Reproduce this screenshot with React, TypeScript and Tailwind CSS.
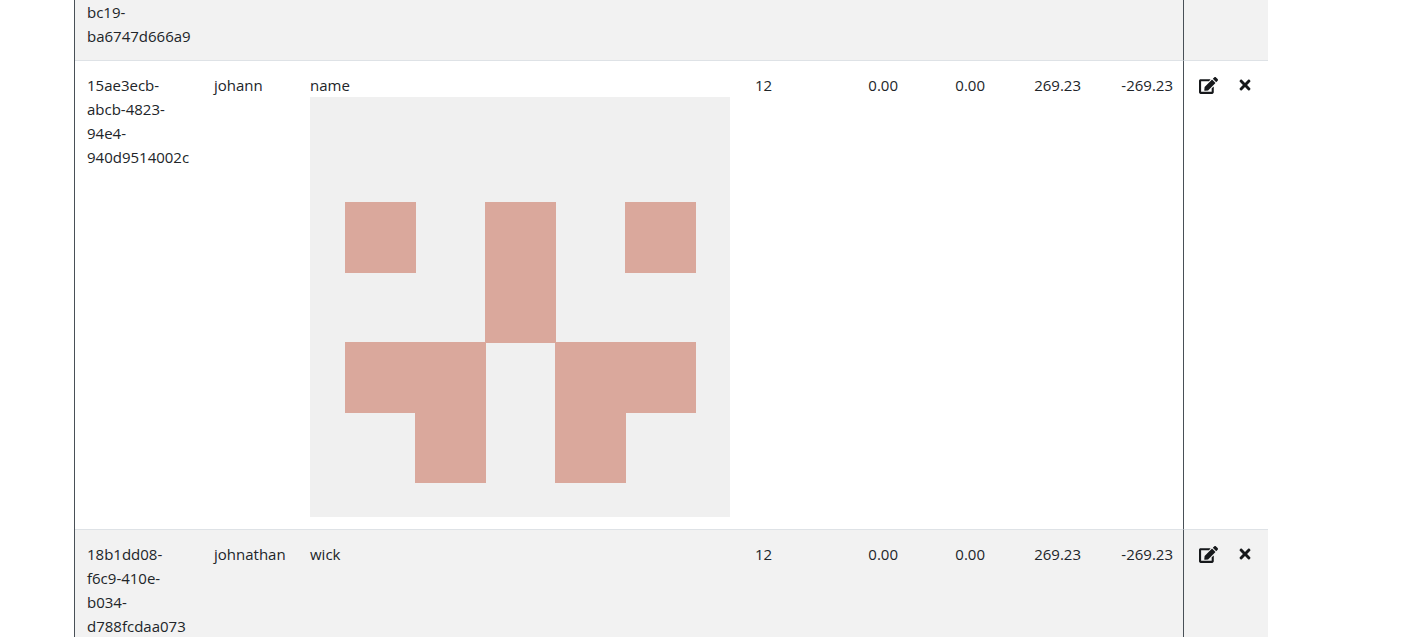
import { FaEdit, FaTimes } from "react-icons/fa";

type Row = {
  id: string[];
  user: string;
  name: string;
  qty: string;
  a: string;
  b: string;
  c: string;
  d: string;
  avatar?: boolean;
};

const rows: Row[] = [
  {
    id: ["15ae3ecb-", "abcb-4823-", "94e4-", "940d9514002c"],
    user: "johann",
    name: "name",
    qty: "12",
    a: "0.00",
    b: "0.00",
    c: "269.23",
    d: "-269.23",
    avatar: true,
  },
  {
    id: ["18b1dd08-", "f6c9-410e-", "b034-", "d788fcdaa073"],
    user: "johnathan",
    name: "wick",
    qty: "12",
    a: "0.00",
    b: "0.00",
    c: "269.23",
    d: "-269.23",
  },
];

// Identicon cells as [col, row]
const cells = [
  [0, 1], [2, 1], [4, 1],
  [2, 2],
  [0, 3], [1, 3], [3, 3], [4, 3],
  [1, 4], [3, 4],
];

const Identicon = () => (
  <svg viewBox="0 0 420 420" className="block w-[420px] h-[420px] bg-[#f0f0f0]">
    {cells.map(([x, y]) => (
      <rect key={`${x}-${y}`} x={35 + x * 70} y={35 + y * 70} width={71} height={71} fill="#daa89c" />
    ))}
  </svg>
);

export default function App() {
  return (
    <div className="h-[637px] overflow-hidden bg-white font-['Open_Sans',sans-serif] text-[15px] leading-6 text-[#212529]">
      <table className="ml-[74px] w-[1194px] table-fixed border-separate border-spacing-0 border-l border-l-[#495057]">
        <colgroup>
          <col className="w-[127px]" />
          <col className="w-[96px]" />
          <col className="w-[445px]" />
          <col className="w-[80px]" />
          <col className="w-[87px]" />
          <col className="w-[87px]" />
          <col className="w-[96px]" />
          <col className="w-[90px]" />
          <col className="w-[85px]" />
        </colgroup>
        <tbody>
          <tr className="bg-[#f2f2f2]">
            <td className="border-b border-b-[#dee2e6] px-3 pb-3 align-top">
              <div>bc19-</div>
              <div>ba6747d666a9</div>
            </td>
            <td colSpan={7} className="border-b border-b-[#dee2e6]" />
            <td className="border-b border-b-[#dee2e6] border-l border-l-[#495057]" />
          </tr>
          {rows.map((row, i) => (
            <tr key={row.user} className={i % 2 ? "bg-[#f2f2f2]" : "bg-white"}>
              <td className="border-b border-b-[#dee2e6] p-3 align-top">
                {row.id.map((part) => (
                  <div key={part}>{part}</div>
                ))}
              </td>
              <td className="border-b border-b-[#dee2e6] px-3 pt-3 align-top">{row.user}</td>
              <td className="border-b border-b-[#dee2e6] p-3 align-top">
                {row.name}
                {row.avatar && <Identicon />}
              </td>
              <td className="border-b border-b-[#dee2e6] pl-3 pr-3 pt-3 align-top">{row.qty}</td>
              <td className="border-b border-b-[#dee2e6] px-3 pt-3 align-top text-right">{row.a}</td>
              <td className="border-b border-b-[#dee2e6] px-3 pt-3 align-top text-right">{row.b}</td>
              <td className="border-b border-b-[#dee2e6] px-3 pt-3 align-top text-right">{row.c}</td>
              <td className="border-b border-b-[#dee2e6] pl-3 pr-2.5 pt-3 align-top text-right">{row.d}</td>
              <td className="border-b border-b-[#dee2e6] border-l border-l-[#495057] pl-[15px] pt-3 align-top">
                <div className="flex items-center h-6 text-[#16181b]">
                  <FaEdit className="w-[19px] h-[17px]" />
                  <FaTimes className="ml-5 w-[14px] h-[16px]" />
                </div>
              </td>
            </tr>
          ))}
        </tbody>
      </table>
    </div>
  );
}
